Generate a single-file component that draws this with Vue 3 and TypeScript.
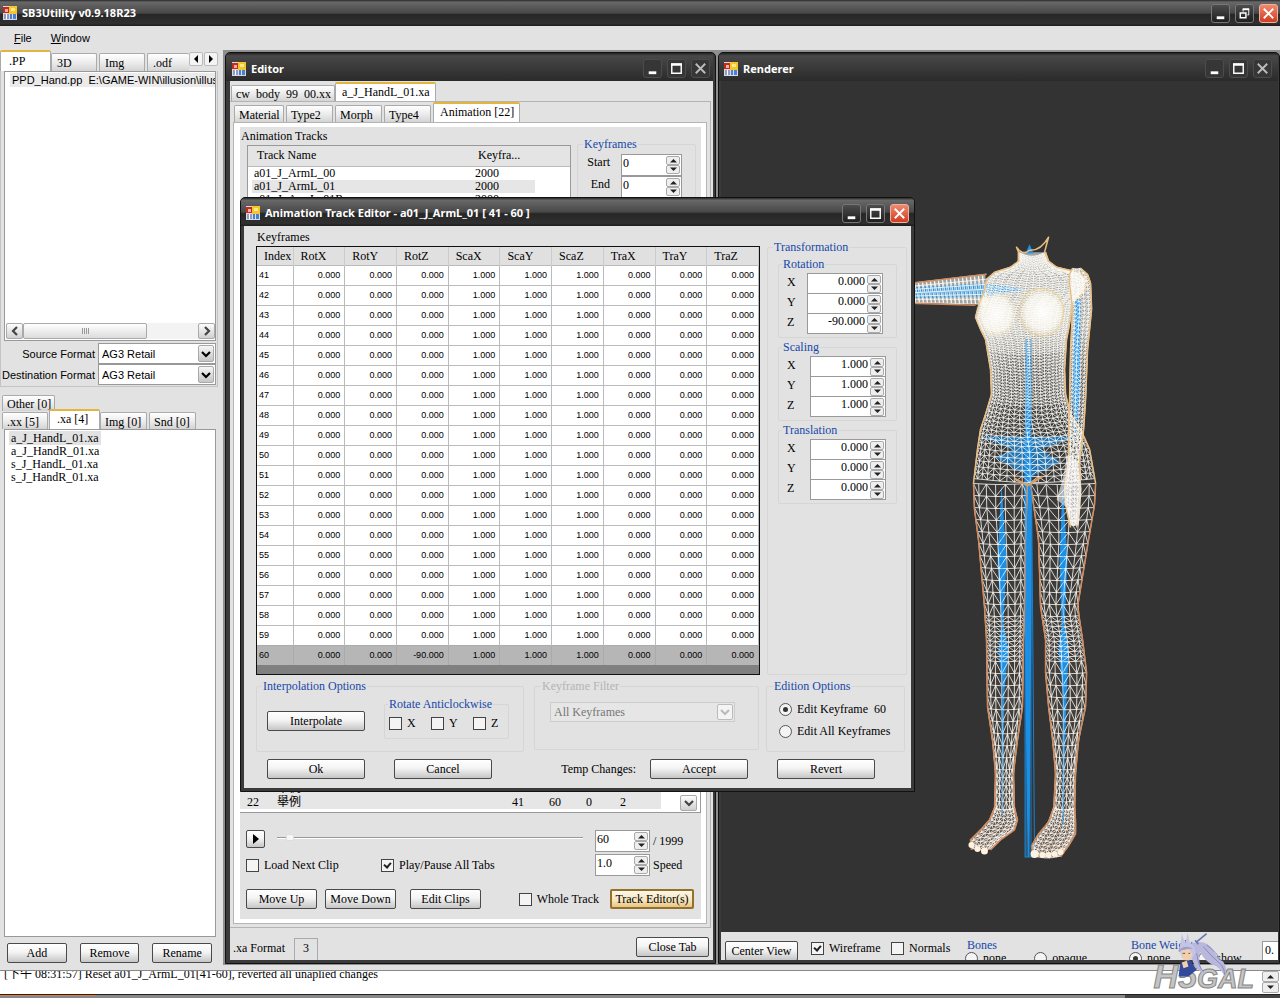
<script setup lang="ts">
import { ref } from 'vue'

type Row = [number, number, number]

const captionKinds = ['Minimize', 'Restore', 'Close']
const columns = ['RotX', 'RotY', 'RotZ', 'ScaX', 'ScaY', 'ScaZ', 'TraX', 'TraY', 'TraZ']
const frames = Array.from({ length: 20 }, (_, i) => {
  const index = 41 + i
  const values = ['0.000', '0.000', index === 60 ? '-90.000' : '0.000', '1.000', '1.000', '1.000', '0.000', '0.000', '0.000']
  return { index, values }
})

const transforms = [
  { name: 'Rotation', values: ['0.000', '0.000', '-90.000'] },
  { name: 'Scaling', values: ['1.000', '1.000', '1.000'] },
  { name: 'Translation', values: ['0.000', '0.000', '0.000'] },
]
const axes = ['X', 'Y', 'Z']

const tracks = [
  { name: 'a01_J_ArmL_00', count: 2000 },
  { name: 'a01_J_ArmL_01', count: 2000 },
  { name: 'a01_J_ArmL_01R', count: 2000 },
]
const clips = [
  [21, '舉例', 21, 40, 0, 2],
  [22, '舉例', 41, 60, 0, 2],
]
const files = ['a_J_HandL_01.xa', 'a_J_HandR_01.xa', 's_J_HandL_01.xa', 's_J_HandR_01.xa']

const editMode = ref('one')
const playAll = ref(true)
const wireframe = ref(true)
const weights = ref('none')

function span(rows: Row[], y: number): [number, number] {
  let i = 0
  while (i < rows.length - 2 && rows[i + 1][0] < y) i++
  const [y0, a0, b0] = rows[i]
  const [y1, a1, b1] = rows[i + 1]
  const t = (y - y0) / (y1 - y0)
  return [a0 + (a1 - a0) * t, b0 + (b1 - b0) * t]
}

// Lattice of rings, ribs and diagonals between a left and a right contour.
function mesh(rows: Row[], cols: number, stepAt: (y: number) => number, bow: number): string {
  const end = rows[rows.length - 1][0]
  const grid: [number, number][][] = []
  for (let y = rows[0][0]; y <= end; y += stepAt(y)) {
    const [l, r] = span(rows, y)
    const line: [number, number][] = []
    for (let c = 0; c <= cols; c++) {
      const u = (c / cols + (1 - Math.cos((Math.PI * c) / cols)) / 2) / 2
      line.push([l + (r - l) * u, y + Math.sin(Math.PI * u) * bow])
    }
    grid.push(line)
  }
  let d = ''
  grid.forEach((line, i) => {
    d += 'M' + line.map((p) => p[0].toFixed(1) + ' ' + p[1].toFixed(1)).join('L')
    if (i === 0) return
    for (let c = 0; c <= cols; c++) {
      const a = grid[i - 1][c]
      const b = line[c]
      d += `M${a[0].toFixed(1)} ${a[1].toFixed(1)}L${b[0].toFixed(1)} ${b[1].toFixed(1)}`
      if (c < cols) {
        const e = line[c + 1]
        const f = grid[i - 1][c + 1]
        d += c % 2 === 0
          ? `M${a[0].toFixed(1)} ${a[1].toFixed(1)}L${e[0].toFixed(1)} ${e[1].toFixed(1)}`
          : `M${f[0].toFixed(1)} ${f[1].toFixed(1)}L${b[0].toFixed(1)} ${b[1].toFixed(1)}`
      }
    }
  })
  return d
}

function outline(rows: Row[]): string {
  const left = rows.map((r) => `${r[1]} ${r[0]}`)
  const right = rows.map((r) => `${r[2]} ${r[0]}`).reverse()
  return 'M' + left.concat(right).join('L') + 'Z'
}

function sides(rows: Row[]): string {
  return 'M' + rows.map((r) => `${r[1]} ${r[0]}`).join('L') + 'M' + rows.map((r) => `${r[2]} ${r[0]}`).join('L')
}

const torso: Row[] = [
  [253, 1018, 1045], [262, 1018, 1048], [268, 1010, 1056], [273, 994, 1078], [280, 986, 1086],
  [292, 984, 1084], [304, 979, 1072], [318, 975, 1070], [330, 980, 1068], [340, 985, 1066],
  [370, 990, 1064], [395, 991, 1065], [415, 985, 1070], [430, 980, 1080], [450, 977, 1089], [484, 973, 1095],
]
const legL: Row[] = [
  [484, 973, 1027], [510, 974, 1026], [540, 978, 1025], [607, 984, 1024], [640, 986, 1023], [707, 987, 1022],
  [740, 992, 1017], [773, 995, 1013], [812, 994, 1014],
]
const legR: Row[] = [
  [484, 1030, 1095], [505, 1033, 1094], [540, 1038, 1088], [607, 1040, 1077], [640, 1045, 1082],
  [673, 1045, 1086], [707, 1048, 1085], [740, 1052, 1078], [773, 1055, 1075], [812, 1053, 1074],
]
const armR: Row[] = [
  [269, 1072, 1080], [275, 1069, 1087], [284, 1069, 1090], [310, 1072, 1091], [350, 1070, 1087], [400, 1069, 1085],
  [430, 1068, 1083], [462, 1068, 1079], [490, 1064, 1080], [510, 1066, 1078], [528, 1070, 1076],
]
const footL: Row[] = [[808, 994, 1014], [820, 989, 1017], [830, 980, 1014], [840, 970, 1000], [850, 971, 990]]
const footR: Row[] = [[808, 1053, 1074], [822, 1048, 1075], [834, 1038, 1075], [846, 1031, 1068], [857, 1033, 1060]]

const torsoStep = (y: number) => (y < 350 ? 2.4 : y < 400 ? 3.2 : y < 440 ? 4.5 : 6)
const legStep = (y: number) => (y > 612 && y < 660 ? 5 : y > 760 ? 8 : 12)

const shapes = [
  { rows: torso, m: mesh(torso, 19, torsoStep, 4), tone: 'edge-body' },
  { rows: legL, m: mesh(legL, 7, legStep, 1), tone: 'edge-leg' },
  { rows: legR, m: mesh(legR, 7, legStep, 1), tone: 'edge-leg' },
  { rows: armR, m: mesh(armR, 5, () => 4, 1), tone: 'edge-body' },
  { rows: footL, m: mesh(footL, 8, () => 4, 2), tone: 'edge-leg' },
  { rows: footR, m: mesh(footR, 9, () => 4, 2), tone: 'edge-leg' },
].map((s) => ({ fill: outline(s.rows), edge: sides(s.rows), m: s.m, tone: s.tone }))

let armMesh = ''
for (let x = 910; x <= 982; x += 4) {
  const k = (x - 910) / 80
  armMesh += `M${x} ${284 - 9 * k}L${x + 1} ${303 + 2 * k}M${x} ${284 - 9 * k}L${x + 5} ${303 + 2 * k}`
}
for (let i = 0; i <= 6; i++) armMesh += `M910 ${284 + i * 3.2}L986 ${275 + i * 5}`
</script>

<template>
  <div class="app">
    <svg class="defs" aria-hidden="true">
      <symbol id="appicon" viewBox="0 0 14 14">
        <rect width="14" height="14" fill="#d8d8e4" />
        <rect x="0" y="1" width="7" height="6" fill="#c8281e" />
        <rect x="2" y="3" width="3" height="3" fill="#f0b0a0" />
        <rect x="6" y="0" width="8" height="8" fill="#f4c62c" />
        <rect x="8" y="2" width="4" height="3" fill="#ffe88a" />
        <rect x="1" y="8" width="5" height="5" fill="#8f9cc0" />
        <rect x="7" y="8" width="6" height="5" fill="#4a80d0" />
        <rect x="3" y="8" width="1" height="5" fill="#fff" />
        <rect x="9" y="8" width="1" height="5" fill="#cfe0ff" />
      </symbol>
      <symbol id="Minimize" viewBox="0 0 18 18"><rect x="5" y="12" width="8" height="3" fill="#fff" /></symbol>
      <symbol id="Maximize" viewBox="0 0 18 18">
        <path d="M4 4.500h10v9.500H4z" fill="none" stroke="#fff" stroke-width="1.500" /><path d="M3.200 4.800h11.600" stroke="#fff" stroke-width="2.500" />
      </symbol>
      <symbol id="Restore" viewBox="0 0 18 18">
        <path d="M7.500 7V4.500h6v6H12" fill="none" stroke="#fff" /><path d="M7 4.500h7" stroke="#fff" stroke-width="2" />
        <path d="M4.500 8.500h6v5h-6z" fill="none" stroke="#fff" stroke-width="1.500" />
      </symbol>
      <symbol id="Close" viewBox="0 0 18 18"><path d="M4 4l10 10M14 4L4 14" stroke="currentColor" stroke-width="2" /></symbol>
      <symbol id="up" viewBox="0 0 9 5"><path d="M1 4.500L4.500 1 8 4.500z" fill="#222" /></symbol>
      <symbol id="down" viewBox="0 0 9 5"><path d="M1 .5L4.500 4 8 .5z" fill="#222" /></symbol>
      <symbol id="chev" viewBox="0 0 10 8"><path d="M1 2l4 4 4-4" fill="none" stroke="currentColor" stroke-width="2.200" /></symbol>
    </svg>

    <header class="caption main-cap">
      <svg class="ico"><use href="#appicon" /></svg>
      <h1>SB3Utility v0.9.18R23</h1>
      <button v-for="k in captionKinds" :key="k" class="cap-btn" :class="{ red: k === 'Close' }" :aria-label="k">
        <svg><use :href="'#' + k" /></svg>
      </button>
    </header>
    <nav class="menu sans">
      <button><u>F</u>ile</button>
      <button><u>W</u>indow</button>
    </nav>

    <main class="main">
      <aside class="side">
        <div class="tabs side-tabs">
          <button class="tab on">.PP</button>
          <button class="tab">3D</button>
          <button class="tab">Img</button>
          <button class="tab">.odf</button>
          <div class="arrows">
            <button aria-label="Scroll left"><svg viewBox="0 0 6 8"><path d="M5 0v8L1 4z" /></svg></button>
            <button aria-label="Scroll right"><svg viewBox="0 0 6 8"><path d="M1 0v8l4-4z" /></svg></button>
          </div>
        </div>
        <section class="pp-pane sans">
          <div class="pp-list">
            <div class="pp-item">PPD_Hand.pp&nbsp; E:\GAME-WIN\illusion\illus</div>
            <div class="hscroll">
              <button class="sb" aria-label="Left"><svg class="turn-l"><use href="#chev" /></svg></button>
              <div class="thumb"><i v-for="n in 4" :key="n"></i></div>
              <button class="sb" aria-label="Right"><svg class="turn-r"><use href="#chev" /></svg></button>
            </div>
          </div>
          <div v-for="f in ['Source', 'Destination']" :key="f" class="format">
            <label :for="f">{{ f }} Format</label>
            <span class="combo">
              <select :id="f"><option>AG3 Retail</option></select>
              <span class="drop"><svg><use href="#chev" /></svg></span>
            </span>
          </div>
        </section>
        <div class="tabs other"><button class="tab">Other [0]</button></div>
        <div class="tabs kinds">
          <button class="tab">.xx [5]</button>
          <button class="tab on">.xa [4]</button>
          <button class="tab">Img [0]</button>
          <button class="tab">Snd [0]</button>
        </div>
        <ul class="files">
          <li v-for="(f, i) in files" :key="f"><span :class="{ sel: i === 0 }">{{ f }}</span></li>
        </ul>
        <div class="side-btns">
          <button class="btn">Add</button>
          <button class="btn">Remove</button>
          <button class="btn">Rename</button>
        </div>
      </aside>

      <div class="mdi">
        <section class="win editor">
          <header class="caption">
            <svg class="ico"><use href="#appicon" /></svg>
            <h2>Editor</h2>
            <button v-for="k in ['Minimize', 'Maximize', 'Close']" :key="k" class="cap-btn dim" :aria-label="k">
              <svg><use :href="'#' + k" /></svg>
            </button>
          </header>
          <div class="ed-body">
            <div class="tabs docs">
              <button class="tab">cw&nbsp; body&nbsp; 99&nbsp; 00.xx</button>
              <button class="tab on">a_J_HandL_01.xa</button>
            </div>
            <div class="doc-pane">
              <div class="tabs pages">
                <button class="tab">Material</button>
                <button class="tab">Type2</button>
                <button class="tab">Morph</button>
                <button class="tab">Type4</button>
                <button class="tab on">Animation [22]</button>
              </div>
              <div class="page">
                <div class="page-in">
                  <div class="tracks">
                    <div class="track-col">
                      <div class="label">Animation Tracks</div>
                      <table class="track-list">
                        <thead><tr><th>Track Name</th><th>Keyfra...</th><th></th></tr></thead>
                        <tbody>
                          <tr v-for="(t, i) in tracks" :key="t.name" :class="{ sel: i === 1 }">
                            <td>{{ t.name }}</td><td>{{ t.count }}</td><td></td>
                          </tr>
                        </tbody>
                      </table>
                    </div>
                    <fieldset class="range">
                      <legend>Keyframes</legend>
                      <div v-for="n in ['Start', 'End']" :key="n" class="range-row">
                        <label :for="'r' + n">{{ n }}</label>
                        <div class="spin">
                          <input :id="'r' + n" value="0" />
                          <div class="ud">
                            <button aria-label="Up"><svg><use href="#up" /></svg></button>
                            <button aria-label="Down"><svg><use href="#down" /></svg></button>
                          </div>
                        </div>
                      </div>
                    </fieldset>
                  </div>
                  <div class="clips">
                    <div class="clip-rows">
                      <div v-for="c in clips" :key="c[0]" class="clip"><span v-for="(v, i) in c" :key="i">{{ v }}</span></div>
                    </div>
                    <button class="sb" aria-label="Down"><svg><use href="#chev" /></svg></button>
                  </div>
                  <div class="player">
                    <div class="seek">
                      <button class="btn play" aria-label="Play"><svg viewBox="0 0 8 10"><path d="M1 0l6 5-6 5z" /></svg></button>
                      <input type="range" min="0" max="1999" value="60" aria-label="Position" />
                    </div>
                    <div class="spin">
                      <input id="pos" value="60" />
                      <div class="ud">
                        <button aria-label="Up"><svg><use href="#up" /></svg></button>
                        <button aria-label="Down"><svg><use href="#down" /></svg></button>
                      </div>
                    </div>
                    <label for="pos">/ 1999</label>
                    <div class="checks">
                      <label><input type="checkbox" />Load Next Clip</label>
                      <label><input v-model="playAll" type="checkbox" />Play/Pause All Tabs</label>
                    </div>
                    <div class="spin">
                      <input id="speed" value="1.0" />
                      <div class="ud">
                        <button aria-label="Up"><svg><use href="#up" /></svg></button>
                        <button aria-label="Down"><svg><use href="#down" /></svg></button>
                      </div>
                    </div>
                    <label for="speed">Speed</label>
                  </div>
                  <div class="ed-actions">
                    <button class="btn">Move Up</button>
                    <button class="btn">Move Down</button>
                    <button class="btn clipbtn">Edit Clips</button>
                    <label><input type="checkbox" />Whole Track</label>
                    <button class="btn gold">Track Editor(s)</button>
                  </div>
                </div>
              </div>
            </div>
            <footer class="ed-foot">
              <span>.xa Format</span><span class="fmt">3</span>
              <button class="btn">Close Tab</button>
            </footer>
          </div>
        </section>

        <section class="win renderer">
          <header class="caption">
            <svg class="ico"><use href="#appicon" /></svg>
            <h2>Renderer</h2>
            <button v-for="k in ['Minimize', 'Maximize', 'Close']" :key="k" class="cap-btn dim" :aria-label="k">
              <svg><use :href="'#' + k" /></svg>
            </button>
          </header>
          <div class="view">
            <svg viewBox="721 82 556 850" aria-label="Wireframe model">
              <defs>
                <linearGradient id="glow" gradientUnits="userSpaceOnUse" x1="0" y1="250" x2="0" y2="860">
                  <stop offset="0" stop-color="#e6eef0" stop-opacity=".6" />
                  <stop offset=".13" stop-color="#f0f0ea" stop-opacity=".6" />
                  <stop offset=".2" stop-color="#c8c8c0" stop-opacity=".2" />
                  <stop offset=".3" stop-color="#60605a" stop-opacity=".1" />
                  <stop offset=".9" stop-color="#b08a6a" stop-opacity=".15" />
                  <stop offset="1" stop-color="#d0a080" stop-opacity=".5" />
                </linearGradient>
                <radialGradient id="soft">
                  <stop offset="0" stop-color="#fff" stop-opacity=".95" />
                  <stop offset=".7" stop-color="#fffdf5" stop-opacity=".7" />
                  <stop offset="1" stop-color="#f6e8c8" stop-opacity=".1" />
                </radialGradient>
              </defs>
              <path class="glow" d="M910 284L985 275V305L910 303z" />
              <path v-for="(s, i) in shapes" :key="'f' + i" class="glow" :d="s.fill" />
              <g class="bones">
                <path d="M1024.500 482V857H1034L1031 482" fill="none" stroke="#1583d8" />
                <path d="M1026 340L1024 482V600L1027 857 1029 857 1031 600V482L1028 340z" />
                <path d="M980 437L1075 437 1040 450 1060 462 1030 478 995 458 1012 450z" opacity=".7" />
                <path d="M1001 485L997 560 1001 625 998 650 1002 690 1002 820 1004 690 1008 650 1003 625 1006 560z" />
                <path d="M1062 485L1059 560 1061 625 1058 650 1063 700 1062 830 1066 700 1068 650 1064 625 1067 560z" />
                <path d="M1074 300L1072 400 1075 440 1079 400 1080 300z" />
                <path d="M915 288L985 284 1026 290 985 297 915 299z" opacity=".8" />
                <path d="M1025 254L1029 245 1033 254z" />
              </g>
              <path class="lines" :d="armMesh" />
              <path class="edge-leg" d="M910 284L960 278 986 275M910 304L975 306" />
              <g v-for="(s, i) in shapes" :key="i">
                <path class="lines" :d="s.m" />
                <path :class="s.tone" :d="s.edge" />
              </g>
              <path class="edge-body" d="M1018 262V253L1016 248Q1022 257 1029 251 1040 252 1048 238L1044 253 1048 262" />
              <ellipse cx="996" cy="315" rx="21" ry="24" fill="url(#soft)" />
              <ellipse cx="1042" cy="313" rx="24" ry="25" fill="url(#soft)" />
              <path d="M1019 312Q1020 290 1041 289 1063 292 1063 314 1060 336 1041 337 1022 334 1019 312" fill="none" stroke="#edcf91" opacity=".8" />
              <path d="M1067 455L1077 462 1081 490 1078 526 1071 526 1066 508 1056 500 1062 480z" fill="#fff" opacity=".6" />
              <path class="bonelines" d="M1025.500 340V857M1030.500 340V857M1001.500 500V815M1062.500 500V825" />
              <path d="M1014 479L1027 486 1042 477" fill="none" stroke="#d9a066" stroke-width="2" />
              <g fill="#fff3df">
                <circle cx="971" cy="845" r="3" /><circle cx="977" cy="849" r="3" /><circle cx="984" cy="851" r="3.500" />
                <circle cx="1034" cy="854" r="4" /><circle cx="1042" cy="855" r="3" /><circle cx="1048" cy="855" r="3" />
                <circle cx="1054" cy="854" r="3" /><circle cx="1060" cy="852" r="3" />
              </g>
            </svg>
          </div>
          <footer class="view-bar">
            <button class="btn">Center View</button>
            <label class="wire"><input v-model="wireframe" type="checkbox" />Wireframe</label>
            <label class="norm"><input type="checkbox" />Normals</label>
            <fieldset class="bones-set">
              <legend>Bones</legend>
              <label><input type="radio" name="bones" value="none" />none</label>
              <label><input type="radio" name="bones" value="opaque" />opaque</label>
            </fieldset>
            <fieldset class="weights-set">
              <legend>Bone Weights</legend>
              <label><input v-model="weights" type="radio" name="weights" value="none" />none</label>
              <label><input v-model="weights" type="radio" name="weights" value="show" />show</label>
            </fieldset>
            <input class="num" value="0." aria-label="Sensitivity" />
          </footer>
        </section>

        <section class="win dialog">
          <header class="caption">
            <svg class="ico"><use href="#appicon" /></svg>
            <h2>Animation Track Editor - a01_J_ArmL_01 [ 41 - 60 ]</h2>
            <button v-for="k in ['Minimize', 'Maximize', 'Close']" :key="k" class="cap-btn" :class="{ red: k === 'Close' }" :aria-label="k">
              <svg><use :href="'#' + k" /></svg>
            </button>
          </header>
          <div class="dlg-body">
            <div class="dlg-grid">
              <div class="keys">
                <div class="label">Keyframes</div>
                <div class="grid-box">
                  <table class="grid">
                    <thead><tr><th class="idx">Index</th><th v-for="c in columns" :key="c">{{ c }}</th></tr></thead>
                    <tbody class="sans">
                      <tr v-for="f in frames" :key="f.index" :class="{ sel: f.index === 60 }">
                        <td class="idx">{{ f.index }}</td><td v-for="(v, i) in f.values" :key="i">{{ v }}</td>
                      </tr>
                    </tbody>
                  </table>
                </div>
              </div>
              <fieldset class="transform">
                <legend>Transformation</legend>
                <fieldset v-for="(t, ti) in transforms" :key="t.name" :class="{ wide: ti > 0 }">
                  <legend>{{ t.name }}</legend>
                  <div v-for="(v, i) in t.values" :key="i" class="axis">
                    <label :for="t.name + i">{{ axes[i] }}</label>
                    <div class="spin right">
                      <input :id="t.name + i" :value="v" />
                      <div class="ud">
                        <button aria-label="Up"><svg><use href="#up" /></svg></button>
                        <button aria-label="Down"><svg><use href="#down" /></svg></button>
                      </div>
                    </div>
                  </div>
                </fieldset>
              </fieldset>
            </div>
            <div class="options">
              <fieldset class="interp">
                <legend>Interpolation Options</legend>
                <button class="btn">Interpolate</button>
                <fieldset class="rotate">
                  <legend>Rotate Anticlockwise</legend>
                  <label v-for="a in axes" :key="a"><input type="checkbox" />{{ a }}</label>
                </fieldset>
              </fieldset>
              <fieldset class="filter" disabled>
                <legend>Keyframe Filter</legend>
                <span class="combo">
                  <select aria-label="Keyframe Filter"><option>All Keyframes</option></select>
                  <span class="drop"><svg><use href="#chev" /></svg></span>
                </span>
              </fieldset>
              <fieldset class="edition">
                <legend>Edition Options</legend>
                <label><input v-model="editMode" type="radio" name="edit" value="one" />Edit Keyframe&nbsp; 60</label>
                <label><input v-model="editMode" type="radio" name="edit" value="all" />Edit All Keyframes</label>
              </fieldset>
            </div>
            <div class="dlg-btns">
              <button class="btn">Ok</button>
              <button class="btn">Cancel</button>
              <span>Temp Changes:</span>
              <button class="btn">Accept</button>
              <button class="btn">Revert</button>
            </div>
          </div>
        </section>
      </div>
    </main>

    <section class="log">
      <div class="log-box">
        <div class="log-text">[下午 08:31:57] Reset a01_J_ArmL_01[41-60], reverted all unaplied changes</div>
        <div class="ud">
          <button aria-label="Up"><svg><use href="#up" /></svg></button>
          <button aria-label="Down"><svg><use href="#down" /></svg></button>
        </div>
      </div>
      <div class="strip"><i></i><b></b></div>
    </section>

    <div class="mark">
      <svg viewBox="0 0 80 60" aria-hidden="true">
        <path d="M24 18Q46 8 56 24 60 34 68 38 74 46 70 56 64 44 56 42 46 38 40 26 36 44 48 54 34 50 30 34z" fill="#b9b7dc" />
        <path d="M44 20Q54 32 66 42 70 48 70 54M36 28Q38 44 44 50M48 18Q62 28 64 36" fill="none" stroke="#7f80b8" />
        <path d="M18 4l4 12 3-13 3 13q7 2 6 12l-5 8-10-2-4-10z" fill="#c4c5e4" />
        <path d="M17 24l9-2 5 8-4 7-7-1z" fill="#f3cfae" />
        <path d="M14 25q6-8 18-3l-8 1z" fill="#9da0cf" />
        <path d="M19 28h3M26 28h2" stroke="#40345a" />
        <path d="M16 40l12-4 8 12-10 8H14z" fill="#33499a" />
        <path d="M18 39l6-2 2 7-6 2z" fill="#f3cfae" />
        <path d="M36 14l12-10M34 12l4 5" stroke="#6a76b6" stroke-width="2" />
      </svg>
      <span class="big">H5</span><span class="small">GAL</span>
    </div>
  </div>
</template>

<style>
html, body { margin: 0; }
</style>

<style scoped>
.app { --face: #e2e2e2; --line: #b4b4b4; --blue: #1748a8; position: relative; display: flex; flex-direction: column; height: 100vh; overflow: hidden; background: var(--face); color: #000; font: 12px/14px "Liberation Serif", "Noto Sans CJK TC", serif; }
.app *, .app *::before, .app *::after { box-sizing: border-box; }
.sans, .sans select { font-family: "Liberation Sans", sans-serif; font-size: 11px; }
.defs { position: absolute; width: 0; height: 0; }
button, input, select { margin: 0; padding: 0; font: inherit; color: inherit; border-radius: 0; outline: 0; }
button { border: 0; background: none; white-space: nowrap; }
svg { display: block; }
fieldset { margin: 0; padding: 0; min-width: 0; border: 1px solid #d6d6d6; border-radius: 2px; }
legend { padding: 0 1px; line-height: 12px; color: var(--blue); }
label { display: flex; align-items: center; white-space: nowrap; }
ul { margin: 0; padding: 0; list-style: none; }
table { border-collapse: collapse; table-layout: fixed; }
th { font-weight: normal; text-align: left; }

input[type="checkbox"], input[type="radio"] { appearance: none; flex: none; width: 13px; height: 13px; margin-right: 5px; border: 1px solid #444; background: #f4f4f4; position: relative; }
input[type="radio"] { border-radius: 50%; border-color: #555; }
input[type="checkbox"]:checked::after { content: ""; position: absolute; left: 3px; top: 1px; width: 5px; height: 7px; border: solid #222; border-width: 0 2px 2px 0; transform: rotate(40deg); }
input[type="radio"]:checked::after { content: ""; position: absolute; left: 3px; top: 3px; width: 5px; height: 5px; border-radius: 50%; background: #333; }

.caption { display: flex; align-items: center; flex: none; padding: 2px 3px 0 4px; color: #fff; background: linear-gradient(#2a2a2a, #686868 8%, #484848 50%, #262626 56%, #303030 90%, #1c1c1c); }
.caption h1, .caption h2 { flex: 1; margin: 0 0 0 5px; font: bold 11px/14px "Noto Sans", sans-serif; white-space: nowrap; }
.ico { width: 14px; height: 14px; }
.cap-btn { width: 19px; height: 19px; margin-left: 5px; padding: 0; border: 1px solid #777; border-radius: 3px; background: linear-gradient(#4c4c4c, #1f1f1f); color: #fff; }
.cap-btn svg { width: 17px; height: 17px; }
.cap-btn.dim { border-color: #4c4c4c; color: #bbb; background: #363636; }
.cap-btn.red { border-color: #f0b0a0; background: linear-gradient(#f08a70, #d03c20); }
.main-cap { height: 26px; padding: 0 2px 0 3px; }

.menu { display: flex; flex: none; align-items: center; height: 24px; padding-left: 14px; gap: 19px; font-size: 11px; }
.main { display: flex; flex: 1; min-height: 0; }

.tabs { display: flex; align-items: flex-end; flex: none; }
.tab { height: 17px; padding: 1px 4px 0; border: 1px solid #aaa; border-bottom: 0; border-radius: 2px 2px 0 0; background: linear-gradient(#fff, #ececec 50%, #d4d4d4); text-align: left; line-height: 14px; overflow: hidden; }
.tab.on { height: 20px; border-top: 2px solid #e3b53c; background: #fff; padding-bottom: 3px; }

.side { display: flex; flex-direction: column; flex: none; width: 218px; }
.side-tabs { height: 21px; }
.side-tabs .tab { width: 46px; margin-right: 2px; padding-left: 5px; height: 18px; }
.side-tabs .tab.on { width: 51px; margin: 0; padding-left: 8px; height: 21px; }
.side-tabs .tab:nth-child(4) { flex: 1; margin: 0; border-right: 0; }
.arrows { display: flex; align-self: flex-start; gap: 1px; padding-top: 2px; }
.arrows button { width: 14px; height: 14px; border: 1px solid #bbb; border-radius: 2px; background: #f4f4f4; }
.arrows svg { width: 6px; height: 8px; margin: auto; }
.pp-pane { flex: none; border: 1px solid #c4c4c4; border-top: 0; padding: 0 1px 1px 3px; }
.pp-list { display: flex; flex-direction: column; justify-content: space-between; height: 270px; padding: 1px 0 1px 1px; border: 1px solid #999; background: #fff; }
.pp-item { margin-left: 4px; padding-left: 2px; line-height: 14px; background: #ebebeb; white-space: nowrap; overflow: hidden; }
.hscroll { display: flex; height: 16px; background: #f3f3f3; }
.sb { display: flex; align-items: center; justify-content: center; width: 17px; height: 16px; border: 1px solid #aaa; border-radius: 2px; background: linear-gradient(#fdfdfd, #d0d0d0); color: #444; }
.sb svg { width: 10px; height: 8px; }
.turn-l { transform: rotate(90deg); }
.turn-r { transform: rotate(-90deg); }
.thumb { display: flex; align-items: center; justify-content: center; gap: 1px; width: 124px; margin-right: auto; border: 1px solid #aaa; border-radius: 2px; background: linear-gradient(#fff, #dcdcdc); }
.thumb i { width: 1px; height: 6px; background: #999; }
.format { display: flex; align-items: center; justify-content: flex-end; gap: 3px; height: 21px; margin-top: 2px; }
.format + .format { margin-top: 0; }
.combo { position: relative; display: block; flex: none; width: 118px; height: 21px; border: 1px solid #999; background: #fff; }
.combo select { appearance: none; display: block; width: 100%; height: 100%; padding-left: 3px; border: 0; background: none; opacity: 1; }
.drop { position: absolute; right: 1px; top: 1px; bottom: 1px; display: flex; align-items: center; justify-content: center; width: 16px; border: 1px solid #aaa; border-radius: 2px; background: linear-gradient(#f6f6f6, #c6c6c6); pointer-events: none; }
.drop svg { width: 10px; height: 8px; }
.other { padding: 8px 0 0 2px; }
.other .tab { width: 53px; height: 16px; padding-right: 0; }
.kinds { height: 18px; padding-left: 2px; }
.kinds .tab { width: 47px; margin-right: 2px; }
.kinds .tab:nth-child(1) { width: 46px; margin: 0; }
.kinds .tab.on { width: 51px; margin: 0 0 0 1px; padding-left: 7px; }
.files { flex: 1; margin: 0 2px 0 4px; padding: 2px 0 0 4px; border: 1px solid #999; background: #fff; line-height: 13px; }
.files span { padding: 0 2px; }
.sel { background: #e2e2e2; }
.side-btns { display: flex; gap: 13px; padding: 6px 6px 2px 7px; }

.btn { height: 20px; border: 1px solid #4a4a4a; border-radius: 2px; background: linear-gradient(#fff, #f4f4f4 45%, #c6c6c6); line-height: 16px; text-align: center; }
.side-btns .btn { width: 60px; }
.gold { border: 2px solid #94702c; background: linear-gradient(#fff8e6, #f5e4bd 60%, #e8c57f); line-height: 14px; }

.mdi { position: relative; flex: 1; margin-left: 5px; background: #8f8f8f; overflow: hidden; }
.win { position: absolute; display: flex; flex-direction: column; background: #3a3a3a; border: 1px solid #111; border-radius: 5px 5px 0 0; overflow: hidden; }
.win .caption { height: 28px; }
.editor { left: 2px; top: 2px; bottom: 1px; width: 491px; padding: 0 2px 3px 4px; }
.editor .caption, .renderer .caption { background: linear-gradient(#222, #484848 10%, #3c3c3c 45%, #2a2a2a); }
.editor .caption { margin-left: -4px; padding: 3px 3px 0 6px; }
.ed-body { display: flex; flex-direction: column; flex: 1; min-height: 0; background: var(--face); }
.docs { height: 20px; padding-left: 1px; }
.docs .tab { width: 104px; height: 16px; padding: 1px 0 0 4px; }
.docs .tab.on { width: 101px; height: 19px; padding: 0 0 1px 6px; }
.doc-pane { display: flex; flex-direction: column; flex: 1; min-height: 0; margin-right: 2px; border: 1px solid var(--line); border-left: 0; }
.pages { height: 20px; padding-left: 4px; gap: 2px; }
.pages .tab { width: 47px; }
.pages .tab:nth-child(1) { width: 50px; }
.pages .tab.on { width: 87px; padding-left: 6px; }
.page { display: flex; flex: 1; min-height: 0; margin: 0 3px 3px; padding: 4px 5px 4px 6px; border: 1px solid var(--line); background: #fff; }
.page-in { display: flex; flex-direction: column; flex: 1; min-width: 0; background: var(--face); }
.tracks { display: flex; flex: 1; min-height: 0; overflow: hidden; }
.track-col { width: 331px; padding-left: 1px; }
.label { line-height: 18px; }
.track-col .label { height: 18px; }
.track-list { width: 324px; margin-left: 6px; background: #fff; outline: 1px solid #999; outline-offset: -1px; line-height: 13px; }
.track-list th { height: 21px; padding: 1px 0 0 10px; border-bottom: 1px solid #bbb; background: #e4e4e4; }
.track-list th:nth-child(2) { width: 67px; }
.track-list th:nth-child(3) { width: 36px; }
.track-list td { padding: 0 0 0 7px; }
.track-list .sel { background: linear-gradient(90deg, transparent 5px, #e6e6e6 5px calc(100% - 36px), transparent 0); }
.range { align-self: flex-start; width: 119px; height: 200px; margin: 11px 0 0 6px; padding-top: 4px; }
.range legend { margin-left: 5px; }
.range-row { display: flex; justify-content: flex-end; gap: 11px; margin-right: 13px; }
.range-row label { align-self: flex-start; line-height: 17px; }
.spin { display: flex; align-items: center; width: 61px; height: 22px; padding-right: 1px; border: 1px solid #999; background: #fff; }
.spin input { flex: 1; min-width: 0; height: 16px; align-self: flex-start; padding-left: 1px; border: 0; background: none; }
.spin.right input { height: 14px; padding-right: 2px; text-align: right; }
.ud { display: flex; flex-direction: column; flex: none; width: 14px; }
.ud button { display: flex; align-items: center; justify-content: center; height: 9px; border: 1px solid #aaa; border-radius: 2px; background: #eee; }
.ud svg { width: 9px; height: 5px; }
.clips { display: flex; justify-content: space-between; align-items: flex-end; height: 60px; flex: none; padding: 0 3px 1px 0; border: 1px solid #999; border-left: 0; background: #fff; }
.clip-rows { width: 421px; padding-bottom: 2px; }
.clip { display: grid; grid-template-columns: 30px 235px 37px 37px 34px 1fr; padding-left: 7px; line-height: 14px; height: 14px; background: #e6e6e6; }
.player { display: grid; grid-template-columns: 1fr 55px 46px; gap: 2px 3px; padding: 17px 2px 4px 6px; }
.player .spin { width: 55px; }
.seek { display: flex; align-items: center; gap: 12px; padding-right: 9px; }
.play { display: flex; align-items: center; justify-content: center; width: 19px; height: 18px; margin-top: -5px; }
.play svg { width: 8px; height: 10px; }
input[type="range"] { appearance: none; flex: 1; height: 11px; margin-top: -8px; background: linear-gradient(transparent 5px, #999 5px 6px, #fff 6px 7px, transparent 7px); }
input[type="range"]::-webkit-slider-thumb { appearance: none; width: 8px; height: 7px; border: 1px solid #ddd; background: #f6f6f6; }
.checks { display: grid; grid-template-columns: 135px 1fr; }
.ed-actions { display: flex; align-items: center; gap: 8px; padding: 9px 7px 10px 6px; }
.ed-actions .btn { width: 71px; }
.ed-actions .clipbtn { margin-left: 6px; }
.ed-actions label { margin-left: auto; }
.ed-actions .gold { width: 84px; margin-left: 3px; }
.ed-foot { display: flex; align-items: center; flex: none; height: 32px; padding: 0 4px 0 3px; }
.fmt { align-self: flex-end; width: 24px; height: 22px; margin-left: 9px; border: 1px solid #aaa; border-bottom: 0; text-align: center; line-height: 19px; }
.ed-foot .btn { align-self: flex-start; width: 73px; margin: 9px 0 0 auto; }
.ed-foot > span:first-child { padding-top: 8px; }

.renderer { left: 495px; right: 0; top: 2px; bottom: 1px; padding: 0 1px 3px 2px; }
.renderer .caption { margin-left: -2px; padding: 3px 6px 0 5px; }
.view { flex: 1; min-height: 0; background: #333; }
.view svg { width: 100%; height: 100%; }
.bones { fill: #1a8fe6; }
.bonelines { stroke: #2196ee; fill: none; opacity: .7; }
.glow { fill: url(#glow); }
.lines { fill: none; stroke: #fffdf6; stroke-width: .8; }
.edge-body { fill: none; stroke: #e8be84; stroke-width: 1.5; stroke-linejoin: round; }
.edge-leg { fill: none; stroke: #cf8a5e; stroke-width: 1.5; stroke-linejoin: round; }
.view-bar { position: relative; display: flex; flex: none; height: 28px; padding-left: 4px; background: var(--face); overflow: hidden; white-space: nowrap; }
.view-bar .btn { flex: none; width: 73px; margin-top: 9px; }
.view-bar > label { flex: none; height: 32px; }
.wire { width: 68px; margin-left: 13px; }
.norm { width: 61px; margin-left: 12px; }
.view-bar fieldset { display: flex; flex: none; height: 40px; margin: 7px 0 0 12px; border-color: transparent; }
.view-bar fieldset label { height: 14px; margin-left: 4px; }
.view-bar .bones-set { width: 152px; margin-left: 8px; }
.bones-set label + label { margin-left: 28px; }
.bones-set legend, .weights-set legend { margin-left: 5px; }
.weights-set { width: 128px; }
.weights-set label + label { margin-left: 28px; }
.num { flex: none; width: 32px; height: 26px; margin: 9px -16px 0 auto; padding: 0 0 8px 2px; border: 1px solid #999; }

.dialog { left: 17px; top: 147px; width: 675px; padding: 0 3px 3px; }
.dialog .caption { margin: 0 -3px; padding: 2px 5px 0 5px; }
.dlg-body { padding: 2px 4px 9px 12px; background: var(--face); }
.dlg-grid { display: flex; gap: 7px; }
.keys { flex: none; width: 504px; }
.keys .label { padding-left: 1px; }
.grid-box { height: 429px; border: 1px solid #111; background: #808080; }
.grid { width: 100%; background: #fff; }
.grid th { height: 18px; padding: 0 0 0 7px; background: #e0e0e0; border-right: 1px solid #ccc; overflow: hidden; }
.grid .idx { width: 36px; text-align: left; }
.grid td { height: 20px; padding: 0 4px 0 0; border-right: 1px solid #bbb; border-top: 1px solid #bbb; font-size: 9px; line-height: 12px; text-align: right; }
.grid td.idx { padding-left: 2px; }
.grid .sel td { background: #b6b6b6; border-color: #aaa; }
.transform { width: 140px; margin-top: 13px; padding: 5px 9px 0 10px; }
.transform > legend { margin-left: -5px; }
.transform fieldset { height: 80px; margin-bottom: 3px; padding: 3px 13px 0 8px; }
.transform fieldset > legend { margin-left: -5px; }
.transform fieldset.wide { padding-right: 10px; }
.axis { display: flex; justify-content: space-between; height: 20px; }
.axis label { line-height: 18px; align-self: flex-start; }
.axis .spin { width: 76px; height: 21px; }
.options { display: flex; padding-top: 5px; }
.interp { display: flex; align-items: flex-start; width: 268px; height: 72px; padding: 20px 0 0 10px; }
.interp > legend { margin-left: -5px; }
.interp .btn { width: 98px; margin-top: -1px; }
.rotate { display: flex; flex: none; width: 125px; height: 41px; margin: -14px 0 0 19px; padding: 4px 0 0 4px; }
.rotate > legend { margin-left: -1px; }
.rotate label { flex: none; width: 42px; height: 18px; }
.filter { width: 225px; height: 70px; margin-left: 10px; padding: 10px 0 0 15px; color: #777; }
.filter legend { margin-left: -9px; color: #b4b4b4; }
.filter .combo { width: 185px; height: 20px; border-color: #ccc; background: #e6e6e6; }
.filter .combo select { color: #777; }
.filter .drop { border-color: #bbb; background: #f4f4f4; color: #bbb; }
.edition { width: 139px; height: 72px; margin-left: 7px; padding: 6px 0 0 12px; }
.edition label { height: 22px; }
.edition legend { margin-left: -6px; }
.dlg-btns { display: flex; align-items: center; gap: 29px; padding: 7px 0 0 11px; }
.dlg-btns .btn { width: 98px; }
.dlg-btns span { width: 115px; text-align: right; }
.dlg-btns span + .btn { margin-left: -15px; }

.log { flex: none; height: 33px; padding-top: 5px; }
.log-box { display: flex; justify-content: space-between; height: 24px; border-top: 1px solid #888; background: #fff; overflow: hidden; }
.log-text { margin: -4px 0 0 4px; line-height: 14px; }
.log .ud { width: 17px; margin-right: 1px; }
.log .ud button { height: 11px; }
.strip { display: flex; height: 4px; background: #888; border-top: 1px solid #222; }
.strip i { width: 96px; border-top: 1px solid #e8763a; }
.strip b { width: 155px; margin-left: auto; background: #444; }

.mark { position: absolute; right: 26px; bottom: 6px; display: flex; align-items: baseline; font: italic bold 34px/26px "Liberation Sans", sans-serif; color: #c4c4c4; -webkit-text-stroke: 1px #858585; pointer-events: none; }
.mark svg { position: absolute; left: 13px; bottom: 10px; width: 66px; height: 54px; }
.mark .small { font-size: 27px; }
</style>
